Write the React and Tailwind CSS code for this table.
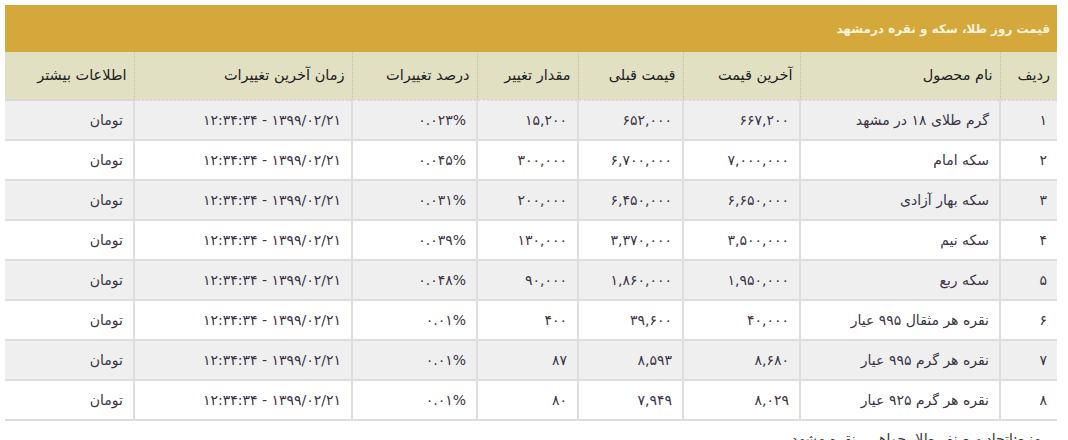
import React from "react";

const rows = [
  ["۱", "گرم طلای ۱۸ در مشهد", "۶۶۷,۲۰۰", "۶۵۲,۰۰۰", "۱۵,۲۰۰", "۰.۰۲۳%"],
  ["۲", "سکه امام", "۷,۰۰۰,۰۰۰", "۶,۷۰۰,۰۰۰", "۳۰۰,۰۰۰", "۰.۰۴۵%"],
  ["۳", "سکه بهار آزادی", "۶,۶۵۰,۰۰۰", "۶,۴۵۰,۰۰۰", "۲۰۰,۰۰۰", "۰.۰۳۱%"],
  ["۴", "سکه نیم", "۳,۵۰۰,۰۰۰", "۳,۳۷۰,۰۰۰", "۱۳۰,۰۰۰", "۰.۰۳۹%"],
  ["۵", "سکه ربع", "۱,۹۵۰,۰۰۰", "۱,۸۶۰,۰۰۰", "۹۰,۰۰۰", "۰.۰۴۸%"],
  ["۶", "نقره هر مثقال ۹۹۵ عیار", "۴۰,۰۰۰", "۳۹,۶۰۰", "۴۰۰", "۰.۰۱%"],
  ["۷", "نقره هر گرم ۹۹۵ عیار", "۸,۶۸۰", "۸,۵۹۳", "۸۷", "۰.۰۱%"],
  ["۸", "نقره هر گرم ۹۲۵ عیار", "۸,۰۲۹", "۷,۹۴۹", "۸۰", "۰.۰۱%"],
];

const headers = [
  ["ردیف", "w-[57px]"],
  ["نام محصول", "w-[200px]"],
  ["آخرین قیمت", "w-[117px]"],
  ["قیمت قبلی", "w-[105px]"],
  ["مقدار تغییر", "w-[101px]"],
  ["درصد تغییرات", "w-[125px]"],
  ["زمان آخرین تغییرات", "w-[218px]"],
  ["اطلاعات بیشتر", "w-[129px]"],
];

export default function App() {
  const font = { fontFamily: '"DejaVu Sans", "Noto Sans", sans-serif' };
  return (
    <div className="bg-white w-[1068px] h-[440px] overflow-hidden pt-[5px] pl-[5px]" style={font}>
      <div className="w-[1052px]" dir="rtl">
        <div className="h-[47px] bg-[#d4a83a] flex items-center pr-[7px] text-[12px] font-bold text-[#fbf3dc]">
          قیمت روز طلا، سکه و نقره درمشهد
        </div>
        <table className="w-[1052px] table-fixed border-collapse">
          <colgroup>
            {headers.map(([, w], i) => (
              <col key={i} className={w} />
            ))}
          </colgroup>
          <thead>
            <tr className="bg-[#e1e0c2] h-[48px]">
              {headers.map(([h], i) => (
                <th
                  key={i}
                  className={
                    "text-right font-normal text-[14.5px] text-[#222] pr-[7px] border-b-2 border-b-[#d8d8d8] " +
                    (i < headers.length - 1 ? "border-l border-l-[#bdbdaa] border-dotted" : "")
                  }
                >
                  {h}
                </th>
              ))}
            </tr>
          </thead>
          <tbody>
            {rows.map((r, ri) => {
              const cells = [...r, "۱۳۹۹/۰۲/۲۱ - ۱۲:۳۴:۳۴", "تومان"];
              return (
                <tr key={ri} className={(ri % 2 === 0 ? "bg-[#efefef]" : "bg-white") + " h-[40px]"}>
                  {cells.map((c, ci) => (
                    <td
                      key={ci}
                      className={
                        "text-right text-[14px] text-[#3b3346] pr-[10px] border-b-2 border-b-[#dddddd] " +
                        (ci < cells.length - 1 ? "border-l-2 border-l-[#dddddd]" : "")
                      }
                    >
                      {c}
                    </td>
                  ))}
                </tr>
              );
            })}
          </tbody>
        </table>
        <div className="text-right text-[14px] leading-[18px] text-[#333] pr-[16px] mt-[9px]">
          منبع:اتحادیه صنف طلا، جواهر و نقره مشهد
        </div>
      </div>
    </div>
  );
}
